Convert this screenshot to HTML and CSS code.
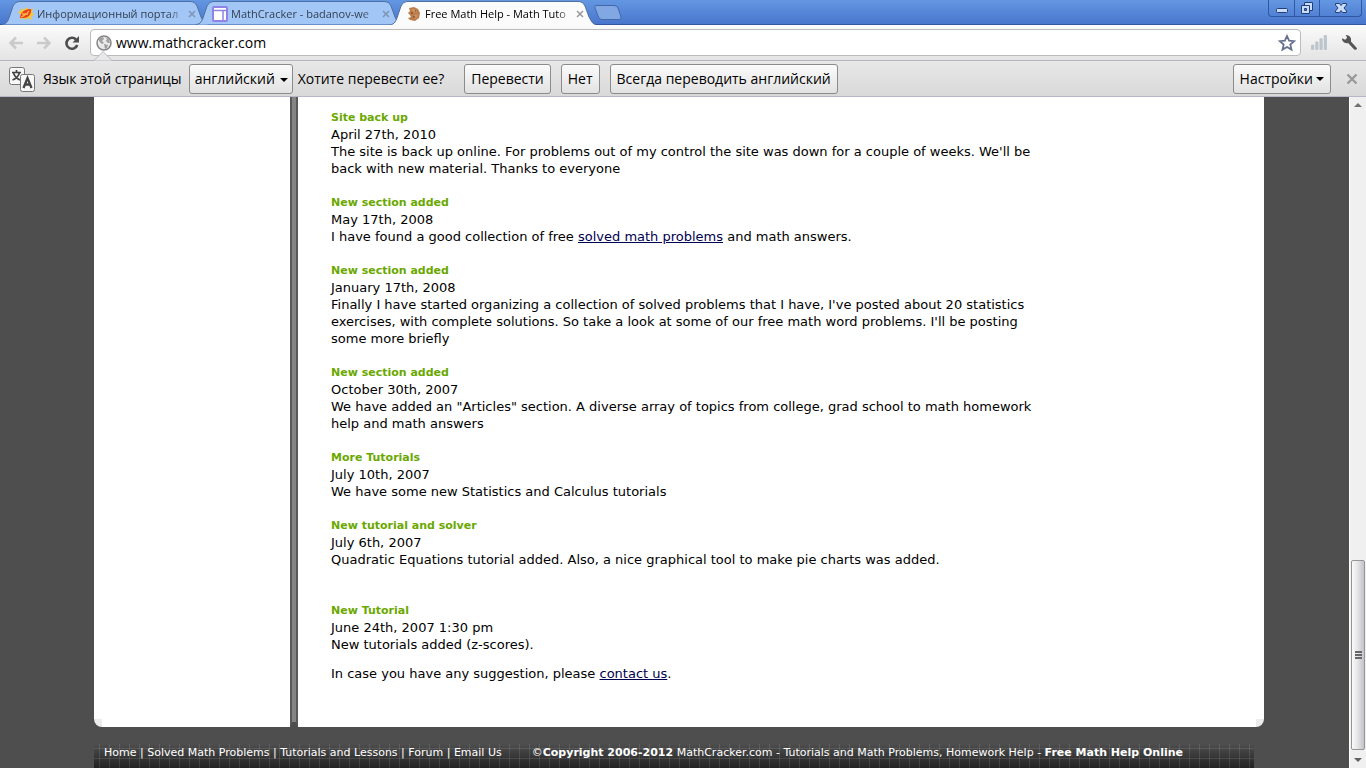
FILE: index.html
```html
<!DOCTYPE html>
<html lang="ru">
<head>
    <meta charset="UTF-8">
    <meta name="viewport" content="width=device-width, initial-scale=1.0">
    <title>Free Math Help - Math Tutorials</title>
    <link rel="stylesheet" href="styles.css">
</head>
<body>
    <header class="tab-strip">
        <nav class="tabs">
            <div class="tab">
                <svg class="tab-shape" viewBox="0 0 206 25" preserveAspectRatio="none"><path d="M0 24.500C5 24 6 21 8 15L11 6Q13 1.500 17 1.500H188Q193 1.500 195 6L199 17Q202 24 206 24.500"/></svg>
                <svg class="tab-icon" viewBox="0 0 16 16">
                    <path d="M3 2l3 2 3-3 2 3 4-2-1 4 2 3-3 1 1 4-4-2-3 2-1-2-4 1 1-4-3-3 3-1z" fill="#fbc62f"/>
                    <path d="M2 12C2 7 6 3 13 3c1 4-2 9-8 9z" fill="#e8401c"/>
                    <path d="M3 11c3-1 6-3 8-6M4 8l6 0" stroke="#ffb347" stroke-width="1.300" fill="none"/>
                </svg>
                <a class="tab-title" href="#">Информационный портал</a>
                <button class="tab-close" aria-label="Закрыть"><svg viewBox="0 0 8 8"><path d="M1 1l6 6M7 1l-6 6"/></svg></button>
            </div>
            <div class="tab">
                <svg class="tab-shape" viewBox="0 0 206 25" preserveAspectRatio="none"><path d="M0 24.500C5 24 6 21 8 15L11 6Q13 1.500 17 1.500H188Q193 1.500 195 6L199 17Q202 24 206 24.500"/></svg>
                <svg class="tab-icon" viewBox="0 0 16 16">
                    <rect x="1" y="1" width="14" height="14" rx="1" fill="#fff" stroke="#9182e8" stroke-width="2"/>
                    <path d="M2 4.500h12M11 5v9" stroke="#9182e8" stroke-width="1.500"/>
                </svg>
                <a class="tab-title" href="#">MathCracker - badanov-we</a>
                <button class="tab-close" aria-label="Закрыть"><svg viewBox="0 0 8 8"><path d="M1 1l6 6M7 1l-6 6"/></svg></button>
            </div>
            <div class="tab active">
                <svg class="tab-shape" viewBox="0 0 206 25" preserveAspectRatio="none"><path d="M0 25C5 24 6 21 8 15L11 6Q13 1.500 17 1.500H188Q193 1.500 195 6L199 17Q202 24 206 25"/></svg>
                <svg class="tab-icon" viewBox="0 0 16 16">
                    <path d="M3 2l5-1 4 2 2 4-1 5-4 3-5-1-2-2 3-1-1-2-2-2 2-2z" fill="#bb7c4c"/>
                    <path d="M5 3l4 0 2 3-3 1zM8 9l4-1-1 4-3 1z" fill="#c98f60"/>
                    <path d="M5 7h2M9 5h1M7 11h2" stroke="#74431f"/>
                </svg>
                <a class="tab-title" href="#">Free Math Help - Math Tuto</a>
                <button class="tab-close" aria-label="Закрыть"><svg viewBox="0 0 8 8"><path d="M1 1l6 6M7 1l-6 6"/></svg></button>
            </div>
        </nav>
        <button class="new-tab" aria-label="Новая вкладка">
            <svg viewBox="0 0 28 17"><path d="M1.500 1.500H20Q23 1.500 24 4L27 13Q27.500 15.500 25 15.500H8Q5.500 15.500 4.500 13L1 4Q.500 1.500 1.500 1.500z"/></svg>
        </button>
        <div class="window-buttons">
            <button aria-label="Свернуть"><svg viewBox="0 0 14 14"><rect x="1.500" y="8.500" width="11" height="4" rx="1"/></svg></button>
            <button aria-label="Развернуть"><svg viewBox="0 0 14 14"><path d="M4.500 2.500h8v8h-8z"/><path d="M1.500 5.500h8v8h-8z"/><path d="M4.500 8.500h2v2h-2z" class="hole"/></svg></button>
            <button class="wide" aria-label="Закрыть окно"><svg viewBox="0 0 14 14"><path d="M1.500 3.500h4L7 5.500l1.500-2h4v1.500L10 8l2.500 3v1.500h-4L7 10.500l-1.500 2h-4V11L4 8 1.500 5z"/></svg></button>
        </div>
    </header>

    <div class="toolbar">
        <button class="nav-btn" aria-label="Назад"><svg viewBox="0 0 16 16"><path d="M15 8H3M8 2.500L2.500 8 8 13.500" stroke="#cacaca" stroke-width="2.500" fill="none"/></svg></button>
        <button class="nav-btn" aria-label="Вперёд"><svg viewBox="0 0 16 16"><path d="M1 8h12M8 2.500L13.500 8 8 13.500" stroke="#cacaca" stroke-width="2.500" fill="none"/></svg></button>
        <button class="nav-btn" aria-label="Обновить"><svg viewBox="0 0 16 16"><path d="M12 4.500A5.500 5.500 0 1 0 13.200 10" stroke="#4d4d4d" stroke-width="2.600" fill="none"/><path d="M15 1v6.500H8.500z" fill="#4d4d4d"/></svg></button>
        <div class="omnibox">
            <svg class="globe" viewBox="0 0 16 16">
                <circle cx="8" cy="8" r="7" fill="#e9e9e9" stroke="#868686" stroke-width="1.500"/>
                <path d="M3 3l4-1 1 2-2 2 2 2-2 1-3-3zM9 2l4 2 1 4-2 0-2-2 1-2zM8 9l4 1-1 3-2 1z" fill="#a0a0a0"/>
            </svg>
            <input type="text" aria-label="Адрес" value="www.mathcracker.com">
            <button class="star" aria-label="Закладка"><svg viewBox="0 0 18 18"><path d="M9 2l2.100 4.700 5.100.500-3.900 3.400 1.200 5L9 13l-4.500 2.600 1.200-5-3.900-3.400 5.100-.500z"/></svg></button>
        </div>
        <button class="tool-btn" aria-label="Сигнал"><svg viewBox="0 0 16 16" fill="#bcc5cc"><rect x="0" y="10" width="3" height="5" rx="1"/><rect x="4" y="7" width="3" height="8" rx="1"/><rect x="8" y="4" width="3" height="11" rx="1"/><rect x="12" y="1" width="3" height="14" rx="1"/></svg></button>
        <button class="tool-btn" aria-label="Настройка"><svg viewBox="0 0 18 18"><path d="M5 1l1.500 3L4.500 6 1 4.500C1 8 4 10.500 7.500 9.500L14 16.500q2.500 1 3-1.500L10.500 8C11.500 4 9 1 5 1z" fill="#555"/></svg></button>
    </div>

    <div class="infobar">
        <svg class="translate-icon" viewBox="0 0 28 28">
            <rect x="1.500" y="2.500" width="15" height="17" rx="2"/>
            <path class="glyph" d="M4 7.500h9M8.500 5v2.500M11.500 7.500c-1 4-3 6-7 7.500M5.500 8c1 3 3 5.500 6.500 7"/>
            <rect x="12.500" y="9.500" width="14" height="17" rx="2"/>
            <path class="glyph bold" d="M15.500 23l4-10 4 10M17 19.500h5"/>
        </svg>
        <label for="lang">Язык этой страницы</label>
        <div class="select-wrap">
            <select id="lang">
                <option>английский</option>
            </select>
        </div>
        <span class="question">Хотите перевести ее?</span>
        <button class="info-btn">Перевести</button>
        <button class="info-btn">Нет</button>
        <button class="info-btn">Всегда переводить английский</button>
        <button class="info-btn settings">Настройки<span class="caret"></span></button>
        <button class="info-close" aria-label="Закрыть панель"><svg viewBox="0 0 12 12"><path d="M1.500 1.500l9 9M10.500 1.500l-9 9"/></svg></button>
        <svg class="notch" viewBox="0 0 18 10"><path d="M0 9.500L9 .500l9 9" /></svg>
    </div>

    <div class="viewport">
        <div class="page">
            <div class="panel">
                <aside class="left-column"></aside>
                <div class="divider"></div>
                <main class="news">
                    <article>
                        <h2>Site back up</h2>
                        <p>April 27th, 2010</p>
                        <p>The site is back up online. For problems out of my control the site was down for a couple of weeks. We'll be back with new material. Thanks to everyone</p>
                    </article>
                    <article>
                        <h2>New section added</h2>
                        <p>May 17th, 2008</p>
                        <p>I have found a good collection of free <a href="#">solved math problems</a> and math answers.</p>
                    </article>
                    <article>
                        <h2>New section added</h2>
                        <p>January 17th, 2008</p>
                        <p>Finally I have started organizing a collection of solved problems that I have, I've posted about 20 statistics exercises, with complete solutions. So take a look at some of our free math word problems. I'll be posting some more briefly</p>
                    </article>
                    <article>
                        <h2>New section added</h2>
                        <p>October 30th, 2007</p>
                        <p>We have added an "Articles" section. A diverse array of topics from college, grad school to math homework help and math answers</p>
                    </article>
                    <article>
                        <h2>More Tutorials</h2>
                        <p>July 10th, 2007</p>
                        <p>We have some new Statistics and Calculus tutorials</p>
                    </article>
                    <article class="spaced">
                        <h2>New tutorial and solver</h2>
                        <p>July 6th, 2007</p>
                        <p>Quadratic Equations tutorial added. Also, a nice graphical tool to make pie charts was added.</p>
                    </article>
                    <article class="last">
                        <h2>New Tutorial</h2>
                        <p>June 24th, 2007 1:30 pm</p>
                        <p>New tutorials added (z-scores).</p>
                    </article>
                    <p>In case you have any suggestion, please <a href="#">contact us</a>.</p>
                </main>
            </div>
            <footer class="footer">
                <nav><a href="#">Home</a> | <a href="#">Solved Math Problems</a> | <a href="#">Tutorials and Lessons</a> | <a href="#">Forum</a> | <a href="#">Email Us</a></nav>
                <p>©<b>Copyright 2006-2012</b> MathCracker.com - Tutorials and Math Problems, Homework Help - <b>Free Math Help Online</b></p>
            </footer>
        </div>
        <div class="scrollbar">
            <span class="arrow up"></span>
            <div class="track"><div class="thumb"><i></i><i></i><i></i></div></div>
            <span class="arrow down"></span>
        </div>
    </div>
</body>
</html>
```
FILE: styles.css
```css
* {
    box-sizing: border-box;
}

body {
    margin: 0;
    height: 100vh;
    display: flex;
    flex-direction: column;
    overflow: hidden;
    font-family: "Open Sans", "Noto Sans", sans-serif;
    font-size: 14px;
    color: #000;
}

button {
    border: none;
    padding: 0;
    background: none;
    font: inherit;
    color: inherit;
}

svg {
    display: block;
}

/* tabs */
.tab-strip {
    display: flex;
    flex: none;
    height: 25px;
    background: linear-gradient(#6497e2, #4876cd);
    border-bottom: 1px solid #35579f;
}

.tabs {
    display: flex;
    padding-left: 2px;
}

.tab {
    position: relative;
    display: flex;
    align-items: center;
    width: 206px;
    height: 25px;
    margin-right: -12px;
    padding: 2px 12px 0 16px;
}

.tab-shape {
    position: absolute;
    left: 0;
    top: 0;
    width: 100%;
    height: 100%;
    fill: #a2c6f5;
    stroke: #50719f;
}

.active .tab-shape {
    fill: #fbfbfb;
}

.tab-icon {
    position: relative;
    flex: none;
    width: 16px;
    height: 16px;
}

.tab-title {
    position: relative;
    flex: 1;
    min-width: 0;
    margin: 0 2px 0 3px;
    white-space: nowrap;
    font-size: 11px;
    line-height: 18px;
    color: #333f50;
    text-decoration: none;
    -webkit-mask-image: linear-gradient(90deg, #000 88%, transparent);
    mask-image: linear-gradient(90deg, #000 88%, transparent);
}

.active .tab-title {
    color: #000;
}

.tab-close {
    position: relative;
    width: 8px;
}

.tab-close svg {
    width: 8px;
    height: 8px;
    stroke: #7f94b3;
    stroke-width: 1.5;
}

.active .tab-close svg {
    stroke: #999;
}

.new-tab {
    display: flex;
    align-items: flex-start;
    margin-left: 10px;
    padding-top: 4px;
}

.new-tab svg {
    width: 28px;
    height: 17px;
    fill: #82a8e4;
    stroke: #4467a8;
}

.window-buttons {
    display: flex;
    height: 17px;
    margin: 0 4px 0 auto;
    border: 1px solid #2f57a2;
    border-top: none;
    border-radius: 0 0 4px 4px;
}

.window-buttons button {
    display: flex;
    justify-content: center;
    width: 25px;
}

.window-buttons button + button {
    border-left: 1px solid #2f57a2;
}

.window-buttons .wide {
    width: 42px;
}

.window-buttons svg {
    width: 14px;
    height: 14px;
    fill: #c9dcf8;
    stroke: #243f78;
}

.window-buttons .hole {
    fill: #5a88d8;
}

/* toolbar */
.toolbar {
    display: flex;
    align-items: center;
    flex: none;
    height: 36px;
    padding: 0 8px;
    background: linear-gradient(#fbfbfb, #e4e4e4);
    border-bottom: 1px solid #b5b8c4;
}

.nav-btn {
    width: 16px;
    margin-right: 12px;
}

.nav-btn:nth-child(3) {
    margin-right: 10px;
}

.nav-btn svg {
    width: 16px;
    height: 16px;
}

.omnibox {
    display: flex;
    align-items: center;
    flex: 1;
    height: 27px;
    padding: 0 4px 0 5px;
    background: #fff;
    border: 1px solid #bbb;
    border-radius: 4px;
}

.globe {
    width: 16px;
    height: 16px;
}

.omnibox input {
    flex: 1;
    border: none;
    outline: none;
    padding: 0 0 0 4px;
    background: none;
    font: inherit;
}

.star svg {
    width: 18px;
    height: 18px;
    fill: #fff;
    stroke: #64718e;
    stroke-width: 1.8;
}

.tool-btn {
    margin-left: 10px;
}

.tool-btn svg {
    width: 17px;
    height: 17px;
}

.tool-btn:last-child {
    margin-left: 13px;
}

/* translate bar */
.infobar {
    position: relative;
    display: flex;
    align-items: center;
    flex: none;
    height: 36px;
    padding: 0 8px;
    background: linear-gradient(#e8e8e8, #d9d9d9);
    border-bottom: 1px solid #b5b8c4;
}

.notch {
    position: absolute;
    left: 94px;
    top: -10px;
    width: 18px;
    height: 10px;
    fill: #e8e8e8;
    stroke: #b5b8c4;
}

.translate-icon {
    width: 28px;
    height: 28px;
    margin-right: 7px;
    fill: #f7f7f7;
    stroke: #777;
}

.translate-icon .glyph {
    fill: none;
    stroke: #444;
    stroke-width: 1.7;
}

.translate-icon .bold {
    stroke-width: 2.3;
}

.select-wrap {
    position: relative;
    margin: 0 5px 0 7px;
}

.select-wrap::after,
.caret {
    border: 4px solid transparent;
    border-top-color: #000;
    border-bottom: none;
}

.select-wrap::after {
    content: "";
    position: absolute;
    right: 5px;
    top: 14px;
    pointer-events: none;
}

.select-wrap select,
.info-btn {
    height: 30px;
    padding: 0 6px;
    border: 1px solid #8b8b8b;
    border-radius: 3px;
    background: linear-gradient(#fbfbfb, #e2e2e2);
    font: inherit;
    color: #000;
    white-space: nowrap;
}

.select-wrap select {
    display: block;
    appearance: none;
    width: 104px;
    padding: 0 5px;
}

.question {
    margin-right: 20px;
}

.info-btn {
    margin-right: 10px;
}

.settings {
    display: flex;
    align-items: center;
    margin: 0 15px 0 auto;
}

.caret {
    margin-left: 3px;
}

.info-close svg {
    width: 12px;
    height: 12px;
    stroke: #999;
    stroke-width: 2.4;
}

/* page */
.viewport {
    flex: 1;
    min-height: 0;
    display: flex;
    background: #4e4e4e;
    font-family: Verdana, "DejaVu Sans", sans-serif;
    font-size: 13px;
    line-height: 17px;
}

.page {
    flex: 1;
    display: flex;
    flex-direction: column;
    padding: 0 85px 0 94px;
}

.panel {
    display: flex;
    background:
        linear-gradient(#ececec, #ececec) left bottom / 8px 8px no-repeat,
        linear-gradient(#ececec, #ececec) right bottom / 8px 8px no-repeat,
        #fff;
    border-radius: 0 0 8px 8px;
}

.left-column {
    width: 196px;
}

.divider {
    width: 8px;
    background: #858585;
    border: 2px solid #5a5a5a;
    border-top: none;
    border-bottom: 5px solid #4e4e4e;
}

.news {
    flex: 1;
    max-width: 747px;
    padding: 12px 0 45px 33px;
}

.news h2,
.news p {
    margin: 0;
}

.news h2 {
    font-size: 11px;
    line-height: 17px;
    color: #6aa800;
}

.news article {
    margin-bottom: 17px;
}

.news .spaced {
    margin-bottom: 34px;
}

.news .last {
    margin-bottom: 12px;
}

.news a {
    color: #000050;
}

.footer {
    flex: 1;
    display: flex;
    gap: 30px;
    margin: 17px 10px 0 0;
    padding: 0 10px;
    font-size: 11px;
    color: #fff;
    white-space: nowrap;
    background:
        repeating-linear-gradient(90deg, transparent 0 5px, rgba(255, 255, 255, 0.1) 5px 6px, transparent 6px 10px),
        repeating-linear-gradient(transparent 0 4px, rgba(255, 255, 255, 0.1) 4px 5px, transparent 5px 10px),
        linear-gradient(#4e4e4e, #222);
}

.footer a {
    color: #fff;
    text-decoration: none;
}

.footer p {
    margin: 0;
}

/* scrollbar */
.scrollbar {
    display: flex;
    flex-direction: column;
    align-items: center;
    width: 17px;
    padding: 6px 0;
    background: #f0f0f0;
    border-left: 1px solid #fff;
}

.arrow {
    border: 4px solid transparent;
}

.arrow.up {
    border-top: none;
    border-bottom-color: #707070;
}

.arrow.down {
    border-bottom: none;
    border-top-color: #606060;
}

.track {
    flex: 1;
    display: flex;
    flex-direction: column;
    justify-content: flex-end;
    width: 100%;
    padding: 0 1px 8px;
}

.thumb {
    display: flex;
    flex-direction: column;
    align-items: center;
    justify-content: center;
    gap: 1px;
    height: 190px;
    border: 1px solid #959595;
    border-radius: 2px;
    background: linear-gradient(90deg, #fafafa, #e6e6e8 45%, #c3c3c9);
}

.thumb i {
    width: 7px;
    height: 2px;
    background: #666;
}
```
